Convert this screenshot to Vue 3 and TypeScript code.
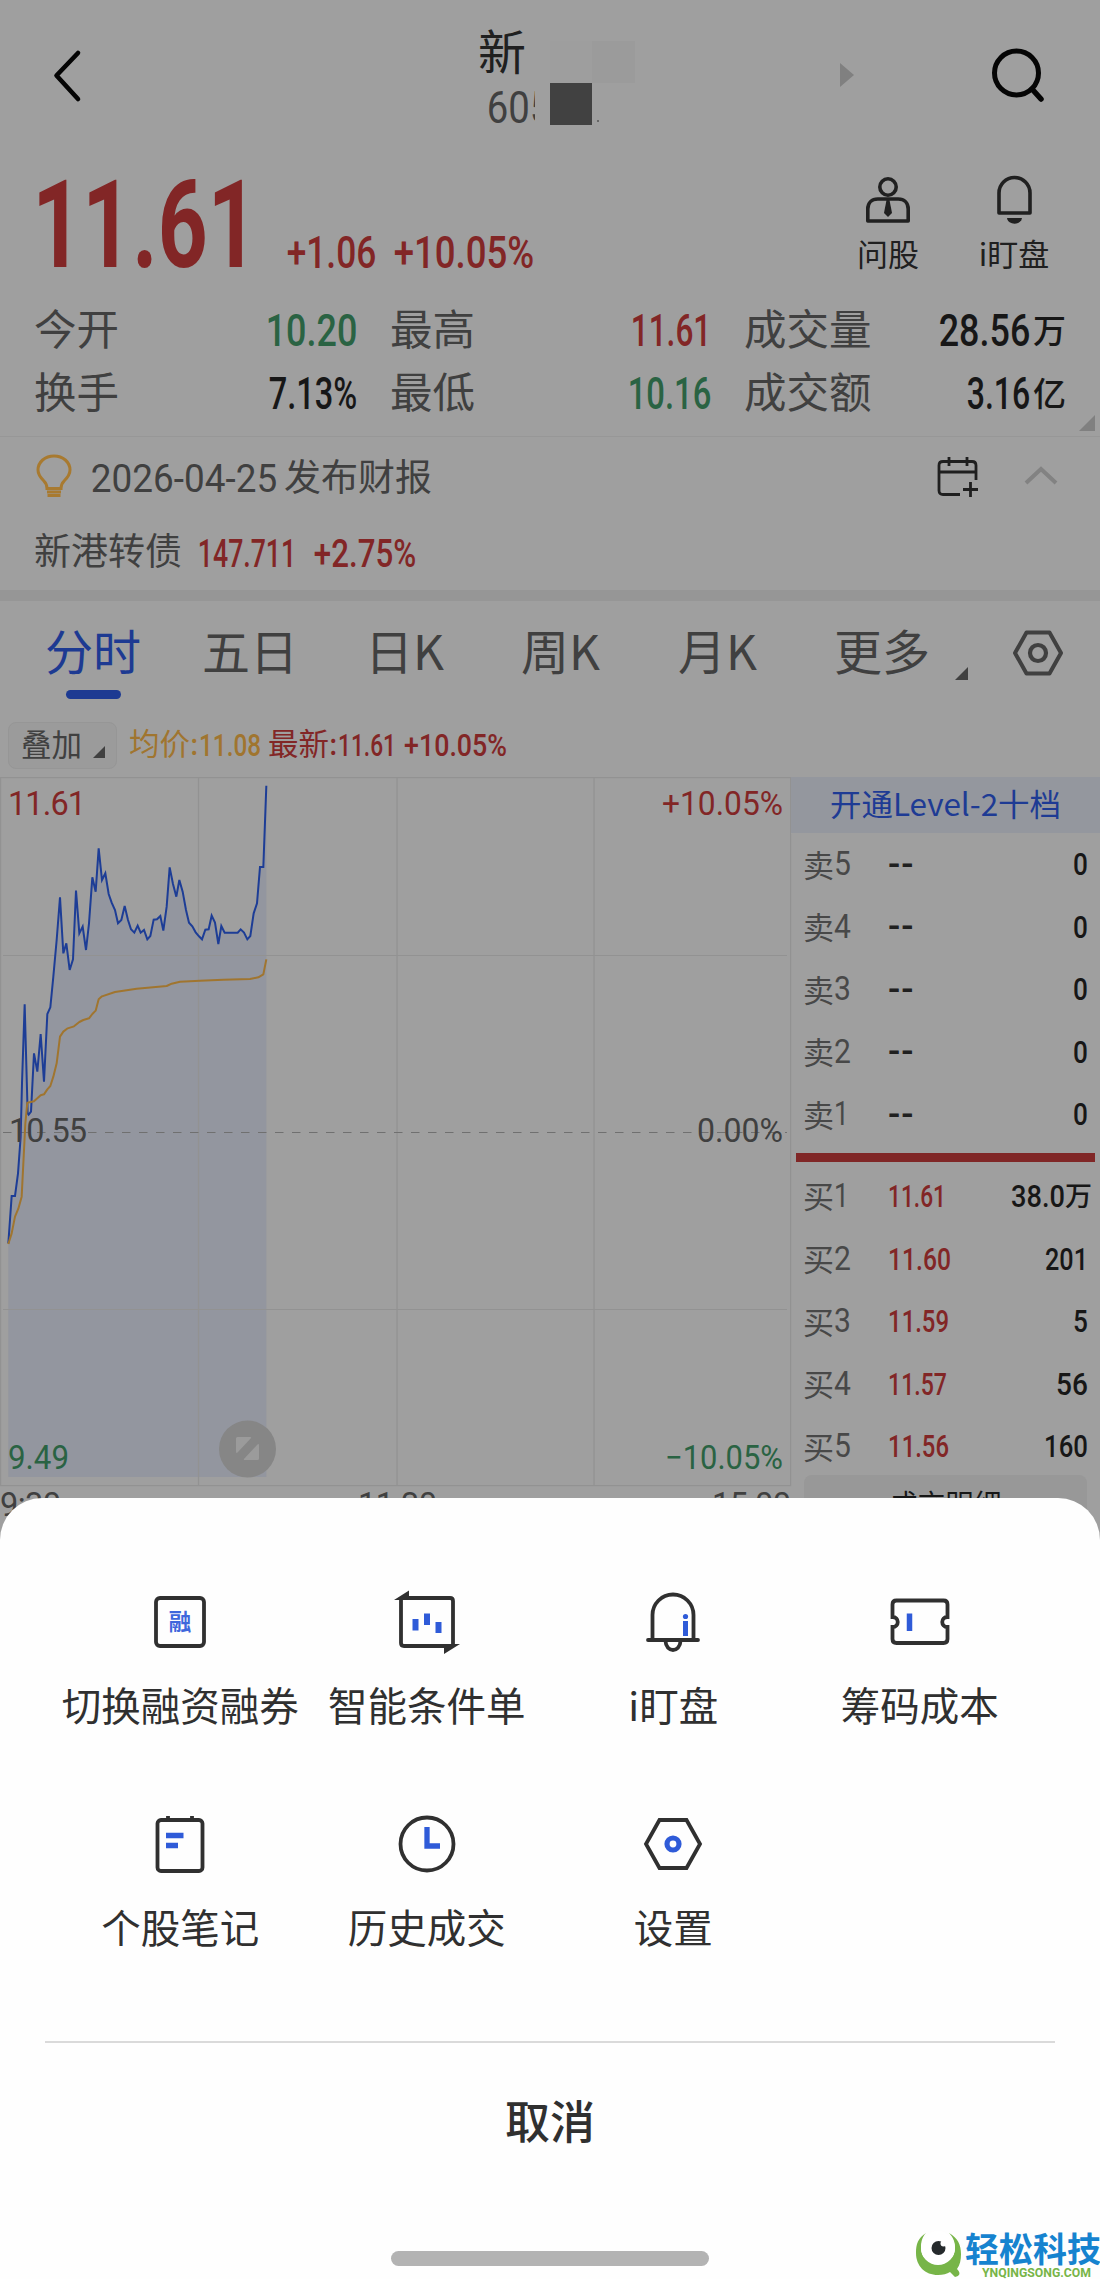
<script setup lang="ts">
import { h, type FunctionalComponent } from 'vue'

/* Condensed figure: w and c are the width and cap height of the drawn digits. */
interface FigProps { t: string; w: number; c?: number; b?: number }
const Fig: FunctionalComponent<FigProps> = (p) => {
  const cap = p.c ?? 22
  const size = cap / 0.711
  const pad = size * 0.03
  return h('svg', { class: 'fig', width: p.w, height: cap }, [
    h('text', {
      x: -pad, y: cap, fill: 'currentColor',
      'font-family': "Roboto, 'Noto Sans CJK SC', sans-serif",
      'font-size': size.toFixed(2), 'font-weight': p.b ?? 500,
      textLength: (p.w + pad * 2).toFixed(1), lengthAdjust: 'spacingAndGlyphs',
    }, p.t),
  ])
}
Fig.props = ['t', 'w', 'c', 'b']

interface Stat { label: string; value: string; w: number; tone: string; unit?: string }
const stats: Stat[] = [
  { label: '今开', value: '10.20', w: 89, tone: 'green' },
  { label: '最高', value: '11.61', w: 78, tone: 'red' },
  { label: '成交量', value: '28.56', w: 89, tone: 'ink', unit: '万' },
  { label: '换手', value: '7.13%', w: 86, tone: 'ink' },
  { label: '最低', value: '10.16', w: 81, tone: 'green' },
  { label: '成交额', value: '3.16', w: 61, tone: 'ink', unit: '亿' },
]

const tabs = ['分时', '五日', '日K', '周K', '月K', '更多']

const asks = [5, 4, 3, 2, 1]
const bids = [
  { p: '11.61', pw: 56, q: '38.0', qw: 52, unit: '万' },
  { p: '11.60', pw: 61, q: '201', qw: 41 },
  { p: '11.59', pw: 59, q: '5', qw: 13 },
  { p: '11.57', pw: 57, q: '56', qw: 30 },
  { p: '11.56', pw: 59, q: '160', qw: 42 },
]

/* Series in thirds of a pixel, measured from 7px above the plot. */
const price = '25,1420 35,1278 45,1278 54,1210 62,1100 66,940 74,703 83,1030 86,1034 93,1025 102,850 112,905 122,792 132,935 142,732 151,712 160,620 170,510 180,382 190,550 199,520 209,600 219,568 228,362 238,490 248,470 258,540 267,460 277,322 287,365 296,235 306,330 316,310 326,372 335,398 345,420 354,460 364,450 374,408 384,450 393,478 403,488 413,467 422,488 432,480 442,508 451,498 461,449 471,448 481,438 490,482 500,410 509,292 519,342 529,380 538,330 548,365 558,420 567,458 577,469 587,487 597,499 606,508 616,479 626,478 635,437 645,458 655,522 664,468 674,488 713,488 722,478 732,488 742,508 751,498 761,430 771,400 780,291 790,291 799,47'
const average = '25,1422 35,1390 45,1340 55,1316 65,1280 70,1180 76,1060 82,998 102,994 122,976 132,973 142,958 151,948 160,920 170,880 180,800 190,785 203,775 222,769 238,756 250,750 267,745 277,732 287,722 296,688 306,679 345,666 410,656 500,648 515,641 540,635 600,632 670,629 750,627 775,622 790,613 799,568'
const area = `25,2121 ${price} 799,2121`

const actions = [
  { icon: 'margin', label: '切换融资融券' },
  { icon: 'order', label: '智能条件单' },
  { icon: 'bell', label: 'i盯盘' },
  { icon: 'ticket', label: '筹码成本' },
  { icon: 'note', label: '个股笔记' },
  { icon: 'clock', label: '历史成交' },
  { icon: 'gear', label: '设置' },
]
</script>

<template>
  <div class="page">
    <header class="top">
      <svg class="back" width="32" height="54" viewBox="0 0 32 54"><path d="M27 4 5.500 26.500 27 50" fill="none" stroke="#050505" stroke-width="4.600" stroke-linecap="round" stroke-linejoin="round" /></svg>
      <div class="title">
        <span class="name">新</span>
        <div class="code"><Fig t="605" :w="62" :c="31" :b="400" /></div>
        <i class="patch p1"></i><i class="patch p2"></i><i class="patch p3"></i><i class="dot"></i>
      </div>
      <svg class="next" width="15" height="24"><path d="M0 0 14 12 0 24Z" fill="#808080" /></svg>
      <svg class="search" width="56" height="58" viewBox="0 0 56 58" fill="none" stroke="#050505"><circle cx="26.500" cy="26" r="22" stroke-width="5" /><path d="m42 42 9 10" stroke-width="5.500" stroke-linecap="round" /></svg>
    </header>

    <section class="quote">
      <Fig class="red last" t="11.61" :w="218" :c="87" :b="700" />
      <Fig class="red chg" t="+1.06" :w="87" :c="31" />
      <Fig class="red pct" t="+10.05%" :w="138" :c="31" />
      <div class="tool ask">
        <svg width="46" height="48" viewBox="0 0 46 48" fill="none" stroke="#202020" stroke-width="3.600"><circle cx="23" cy="11" r="8.200" /><path d="M2.800 45V33c0-6 4-10 10-10h20.400c6 0 10 4 10 10v12z" stroke-linejoin="round" /><path d="M21.500 24h3l2.500 13-4 4-4-4z" fill="#202020" stroke="none" /></svg>
        <span>问股</span>
      </div>
      <div class="tool">
        <svg width="46" height="48" viewBox="0 0 46 48" fill="none" stroke="#202020" stroke-width="3.600"><path d="M8 37V17a15.500 15.500 0 0 1 31 0v20z" stroke-linejoin="round" /><path d="M16 42h15c-1 7.500-14 7.500-15 0z" fill="#202020" stroke="none" /></svg>
        <span>i盯盘</span>
      </div>
    </section>

    <section class="stats">
      <div v-for="s in stats" :key="s.label" class="stat">
        <span>{{ s.label }}</span>
        <div class="val" :class="s.tone"><Fig :t="s.value" :w="s.w" :c="31" /><b v-if="s.unit">{{ s.unit }}</b></div>
      </div>
      <svg class="corner" width="16" height="16"><path d="M16 0V16H0Z" fill="#808080" /></svg>
    </section>

    <section class="news">
      <div class="line">
        <svg width="36" height="44" viewBox="0 0 36 44" fill="none" stroke="#a87a30" stroke-width="3"><path d="M11 34.500c0-3.500-1-5.500-3.500-8C4 23 2 20.500 2 16 2 8 9 2 18 2s16 6 16 14c0 4.500-2 7-5.500 10.500-2.500 2.500-3.500 4.500-3.500 8z" /><path d="M11 38h14M11.500 41.500h13" stroke-width="2.800" /></svg>
        <Fig class="date" t="2026-04-25" :w="184" :c="27" :b="400" />
        <span>发布财报</span>
        <svg class="cal" width="42" height="42" viewBox="0 0 42 42" fill="none" stroke="#1f1f1f" stroke-width="2.800"><path d="M23 38.500H6c-2.500 0-4-1.500-4-4V9.500C2 7 3.500 5.500 6 5.500h29c2.500 0 4 1.500 4 4V24M2 16h37M12 1v9M30 1v9M26 33.500h15M33.500 26v15" /></svg>
        <svg width="34" height="20"><path d="m2 17 15-14 15 14" fill="none" stroke="#828282" stroke-width="4" /></svg>
      </div>
      <div class="line bond">
        <span>新港转债</span>
        <Fig class="red" t="147.711" :w="96" :c="27" />
        <Fig class="red" t="+2.75%" :w="100" :c="27" />
      </div>
    </section>

    <nav class="tabs">
      <span v-for="(t, i) in tabs" :key="t" class="tab" :class="{ on: i === 0 }">{{ t }}</span>
      <svg class="tri" width="13" height="13"><path d="M13 0V13H0Z" fill="#404040" /></svg>
      <svg class="hex" width="50" height="46" viewBox="0 0 50 46" fill="none" stroke="#404040" stroke-width="4"><path d="M13.500 2.500h23L48 23 36.500 43.500h-23L2 23z" stroke-linejoin="round" /><circle cx="25" cy="23" r="8" stroke-width="4.200" /></svg>
    </nav>

    <section class="legend">
      <div class="chip"><span>叠加</span><svg width="12" height="12"><path d="M12 0V12H0Z" fill="#404040" /></svg></div>
      <div class="leg gold"><span>均价:</span><Fig t="11.08" :w="60" /></div>
      <div class="leg red"><span>最新:</span><Fig t="11.61" :w="56" /><Fig class="lp" t="+10.05%" :w="101" /></div>
    </section>

    <main class="market">
      <svg class="chart" width="791" height="760" viewBox="0 0 791 760">
        <g transform="translate(0 -7) scale(.33333)"><polygon :points="area" fill="#93969f" /></g>
        <g stroke="#929292" stroke-width="1.200" fill="none">
          <path d="M.6.6h790v708H.6z" />
          <path d="M198.500 1v707M397 1v707M594 1v707M3 178.500h784M3 532.500h784" />
          <path d="M3 355.500h784" stroke="#707070" stroke-dasharray="8.500 8.500" />
        </g>
        <g transform="translate(0 -7) scale(.33333)" fill="none" stroke-linejoin="miter">
          <polyline :points="price" stroke="#1d3d96" stroke-width="6" />
          <polyline :points="average" stroke="#a0752f" stroke-width="6" stroke-linejoin="round" />
        </g>
        <g font-family="Roboto, sans-serif" font-size="32.500">
          <g fill="#822626">
            <text x="8" y="37.500" textLength="78">11.61</text>
            <text x="662" y="37.500" textLength="121" lengthAdjust="spacingAndGlyphs">+10.05%</text>
          </g>
          <g fill="#404040">
            <text x="9" y="364.500" textLength="78">10.55</text>
            <text x="697" y="364.500" textLength="86" lengthAdjust="spacingAndGlyphs">0.00%</text>
            <text x="0" y="739" textLength="61">9:30</text>
            <text x="358" y="739" textLength="79">11:30</text>
            <text x="712" y="739" textLength="79">15:00</text>
          </g>
          <g fill="#2a6343">
            <text x="8" y="692" textLength="61" lengthAdjust="spacingAndGlyphs">9.49</text>
            <text x="665" y="692" textLength="118" lengthAdjust="spacingAndGlyphs">−10.05%</text>
          </g>
        </g>
        <circle cx="247.500" cy="672" r="28.500" fill="#868686" />
        <path d="M237.500 660h12.500q2 0 .6 1.500L238 675q-2 2-2-.5v-13q0-1.500 1.500-1.500zM257.500 683H245q-2 0-.6-1.500L257 668q2-2 2 .5v13q0 1.500-1.500 1.500z" fill="#9b9b9b" />
      </svg>

      <aside class="book">
        <div class="level"><svg width="231" height="40"><text x="0" y="26" textLength="231" lengthAdjust="spacingAndGlyphs" font-size="31" fill="#1e3b94">开通Level-2十档</text></svg></div>
        <div v-for="n in asks" :key="'a' + n" class="row">
          <span>卖</span><Fig class="n" :t="String(n)" :w="n === 1 ? 13 : 15" :c="23" :b="400" />
          <span class="dash" :class="{ one: n === 1 }">--</span>
          <Fig class="q" t="0" :w="13" />
        </div>
        <div class="ratio"></div>
        <div v-for="(b, i) in bids" :key="b.p" class="row">
          <span>买</span><Fig class="n" :t="String(i + 1)" :w="i ? 15 : 13" :c="23" :b="400" />
          <Fig class="p red" :class="{ one: i === 0 }" :t="b.p" :w="b.pw" />
          <Fig class="q" :t="b.q" :w="b.qw" /><b v-if="b.unit">{{ b.unit }}</b>
        </div>
        <div class="detail">成交明细</div>
      </aside>
    </main>

    <div class="sheet">
      <div class="grid">
        <div v-for="a in actions" :key="a.icon" class="act">
          <svg width="66" height="66" viewBox="0 0 66 66" fill="none" stroke="#303030" stroke-width="3.800">
            <template v-if="a.icon === 'margin'"><rect x="9" y="9" width="48" height="48" rx="4" /><text x="33" y="41" text-anchor="middle" font-size="22.500" font-weight="700" fill="#3f67dc" stroke="none">融</text></template>
            <template v-else-if="a.icon === 'order'">
              <path d="M7.500 9H56q3 0 3 3v44M58.500 57H10q-3 0-3-3V9" /><path d="M0 11 15 1.500V11zM66 55 50 65V55z" fill="#303030" stroke="none" />
              <path d="M21.500 30v11.500M33 24.500V36M44.500 33v11" stroke="#2f5bd8" stroke-width="6" />
            </template>
            <template v-else-if="a.icon === 'bell'">
              <path d="M12.500 51V26a20.500 20.500 0 0 1 41 0v25M8 51h50M25.500 52c.5 12 14.500 12 15 0" stroke-linecap="round" />
              <path d="M45.500 32v15" stroke="#2f5bd8" stroke-width="5" /><circle cx="45.500" cy="27.500" r="2.600" fill="#2f5bd8" stroke="none" />
            </template>
            <template v-else-if="a.icon === 'ticket'">
              <path d="M9.500 11.500h47q4 0 4 4v12.500c-7 0-7 10 0 10v12q0 4-4 4h-47q-4 0-4-4V38c7 0 7-10 0-10V15.500q0-4 4-4z" /><path d="M22.500 24.500v17.500" stroke="#2f5bd8" stroke-width="5.500" />
            </template>
            <template v-else-if="a.icon === 'note'">
              <rect x="10.500" y="9" width="45" height="51" rx="3.500" /><path d="M21 5v6M45 5v6" />
              <path d="M19 24.500h17.500M19 34.500h12" stroke="#2f5bd8" stroke-width="5.300" />
            </template>
            <template v-else-if="a.icon === 'clock'"><circle cx="33" cy="33" r="26.500" /><path d="M33 16v19h13" stroke="#2f5bd8" stroke-width="5.300" /></template>
            <template v-else><path d="M19.500 9h27L60 33 46.500 57h-27L6 33z" /><circle cx="33" cy="33" r="6" stroke="#2f5bd8" stroke-width="5.200" /></template>
          </svg>
          <span>{{ a.label }}</span>
        </div>
      </div>
      <div class="cancel">取消</div>
      <div class="home"></div>
      <div class="mark">
        <svg width="48" height="46" viewBox="0 0 48 46"><path d="M11 1C3 6 1 12 1 21c0 13 9 22 22 22 5 0 9-1 12-3l5 5c5-1 6-4 2-8 3-4 4-9 4-15C46 13 43 6 34 1c5 5 6 10 6 15 0 9-6 15-17 15S6 25 6 16C6 10 7 5 11 1z" fill="#77b548" /><circle cx="23" cy="16" r="17" fill="#fff" /><circle cx="23.500" cy="16" r="7" fill="#252a2c" /><circle cx="28.500" cy="11.500" r="3" fill="#fff" /></svg>
        <div class="words">
          <svg width="136" height="33"><text x="0" y="28" textLength="136" lengthAdjust="spacingAndGlyphs" font-size="34" font-weight="700" fill="#1683cf">轻松科技</text></svg>
          <svg class="url" width="110" height="12"><text x="0" y="9.500" textLength="109" lengthAdjust="spacingAndGlyphs" font-family="Roboto, sans-serif" font-size="13" font-weight="700" fill="#77b548">YNQINGSONG.COM</text></svg>
        </div>
      </div>
    </div>
  </div>
</template>

<style>
body { margin: 0; }
</style>

<style scoped>
.page { position: relative; width: 1100px; height: 2279px; overflow: hidden; background: #9f9f9f; color: #404040; font-family: 'Noto Sans CJK SC', sans-serif; }
.page * { box-sizing: border-box; }
svg { display: block; flex: none; overflow: visible; }
span, b { white-space: nowrap; }
.red { color: #822626; }
.green { color: #2a6343; }
.ink { color: #171717; }
.gold { color: #a0752f; }

.top { display: flex; align-items: flex-start; height: 150px; }
.back { margin: 49px 0 0 51px; }
.title { position: relative; width: 180px; height: 130px; margin-left: 394px; padding: 25px 0 0 1px; color: #202020; }
.name { display: block; height: 48px; font-size: 48px; line-height: 48px; }
.code { width: 47px; margin: 17px 0 0 10px; padding: 2px 0; overflow: hidden; color: #404040; }
.patch { position: absolute; width: 42px; height: 42px; }
.p1 { left: 73px; top: 41px; background: #9e9e9e; }
.p2 { left: 115px; top: 41px; width: 43px; background: #9b9b9b; }
.p3 { left: 73px; top: 83px; background: #414141; }
.dot { position: absolute; left: 120px; top: 120px; width: 2px; height: 2px; background: #666; }
.next { margin: 63px 0 0 183px; }
.search { margin: 47px 0 0 135px; }

.quote { display: flex; align-items: flex-start; height: 145px; }
.last { margin: 30px 0 0 36px; }
.chg { margin: 87px 0 0 34px; }
.pct { margin: 87px 0 0 20px; }
.tool { display: flex; flex-direction: column; align-items: center; gap: 13px; width: 80px; margin: 26px 0 0 46px; color: #202020; font-size: 31px; line-height: 32px; }
.ask { margin-left: 315px; }

.stats { position: relative; display: grid; grid-template-columns: 322px 320px 322px; column-gap: 34px; row-gap: 20px; height: 141px; padding: 10px 0 0 34px; align-content: start; }
.stat { display: flex; align-items: flex-end; justify-content: space-between; height: 43px; font-size: 42.5px; line-height: 43px; }
.val { display: flex; align-items: flex-end; padding-bottom: 2.5px; }
.val b { width: 33px; height: 33px; margin: 0 0 0 4px; font-size: 33px; line-height: 33px; font-weight: 500; }
.corner { position: absolute; right: 5px; top: 120px; }

.news { height: 154px; border-top: 1px solid #979797; }
.line { display: flex; align-items: flex-end; height: 58px; padding-left: 36px; font-size: 37px; line-height: 37px; }
.line > svg:first-child { margin-bottom: -3px; }
.line span { height: 38px; }
.date { margin: 0 8px 3.5px 20px; }
.cal { margin: 0 45px -3px 505px; }
.line > svg:last-child { margin-bottom: 9px; }
.bond { height: 74px; padding-left: 34px; }
.bond .red, .bond > svg:last-child { margin: 0 0 2px 17px; }
.bond > svg:last-child { margin-left: 20px; }

.tabs { display: flex; align-items: flex-start; height: 119px; padding: 24px 0 0 45px; border-top: 11px solid #969696; font-size: 48px; line-height: 48px; }
.tab { position: relative; height: 74px; }
.tab:nth-child(2) { margin-left: 61px; }
.tab:nth-child(3) { margin-left: 67px; }
.tab:nth-child(4) { margin-left: 77px; }
.tab:nth-child(5) { margin-left: 78px; }
.tab:nth-child(6) { margin-left: 77px; }
.on { color: #1d3a92; }
.on::after { content: ''; position: absolute; left: 21px; bottom: 0; width: 55px; height: 9px; border-radius: 5px; background: #1d3a92; }
.tri { margin: 42px 0 0 25px; }
.hex { margin: 5px 0 0 45px; }

.legend { display: flex; align-items: flex-start; height: 68px; padding: 13px 0 0 8px; font-size: 30.5px; line-height: 31px; }
.chip { display: flex; width: 109px; height: 47px; padding: 5px 0 0 12px; border: 1px solid #969696; border-radius: 8px; background: #9b9b9b; }
.chip svg { margin: 18px 0 0 11px; }
.leg { display: flex; align-items: flex-end; height: 37px; margin-left: 12px; }
.leg + .leg { margin-left: 8px; }
.leg span { width: 71px; height: 32px; }
.leg svg { margin-bottom: 3px; }
.leg .lp { margin-left: 10px; }

.market { display: flex; align-items: flex-start; }
.book { width: 309px; }
.level { display: flex; justify-content: center; height: 57px; padding: 13px 0 0 0; border-bottom: 1px solid #9f9f9f; background: #94979e; }
.row { display: flex; align-items: flex-end; height: 62.6px; padding: 0 13px 18px 12px; color: #171717; font-size: 31px; line-height: 31px; }
.level + .row { height: 60px; }
.row > span { width: 31px; color: #484848; height: 28.5px; }
.n { color: #484848; margin: 0 0 1px 1px; }
.row .dash { width: 30px; margin-left: 38px; color: #202020; font-family: Roboto, sans-serif; font-weight: 500; font-size: 36px; letter-spacing: 1px; transform: translateY(2px); }
.row .p { margin: 0 0 1px 39px; }
.row .one { margin-left: 41px; }
.row .dash.one { margin-left: 40px; }
.row .q { margin: 0 0 1px auto; }
.row b { width: 26px; height: 29px; margin-left: 1px; font-size: 27px; font-weight: 500; }
.row:has(b) { padding-right: 9px; }
.ratio { width: 299px; height: 9px; margin: 9px 0 1px 5px; background: #802727; }
.detail { width: 283px; height: 60px; margin: -1px 0 0 13px; padding-top: 14px; border-radius: 8px 8px 0 0; background: #989898; color: #171717; font-size: 28px; line-height: 28px; text-align: center; }

.sheet { position: absolute; left: 0; top: 1498px; width: 1100px; height: 781px; border-radius: 42px 42px 0 0; background: #fefefe; color: #303030; }
.grid { display: grid; grid-template-columns: repeat(4, 246.5px); grid-auto-rows: 222px; height: 545px; margin: 0 45px; padding: 91px 0 0 12px; border-bottom: 2px solid #dadada; }
.act { display: flex; flex-direction: column; align-items: center; gap: 29px; font-size: 39.5px; line-height: 40px; }
.cancel { margin-top: 54px; font-size: 45px; line-height: 45px; font-weight: 500; text-align: center; }
.home { width: 318px; height: 15px; margin: 109px 0 0 391px; border-radius: 8px; background: #b3b3b3; }
.mark { position: absolute; left: 915px; bottom: 0; display: flex; gap: 2px; }
.words { padding-top: 2px; }
.url { margin-left: 17px; }
</style>
